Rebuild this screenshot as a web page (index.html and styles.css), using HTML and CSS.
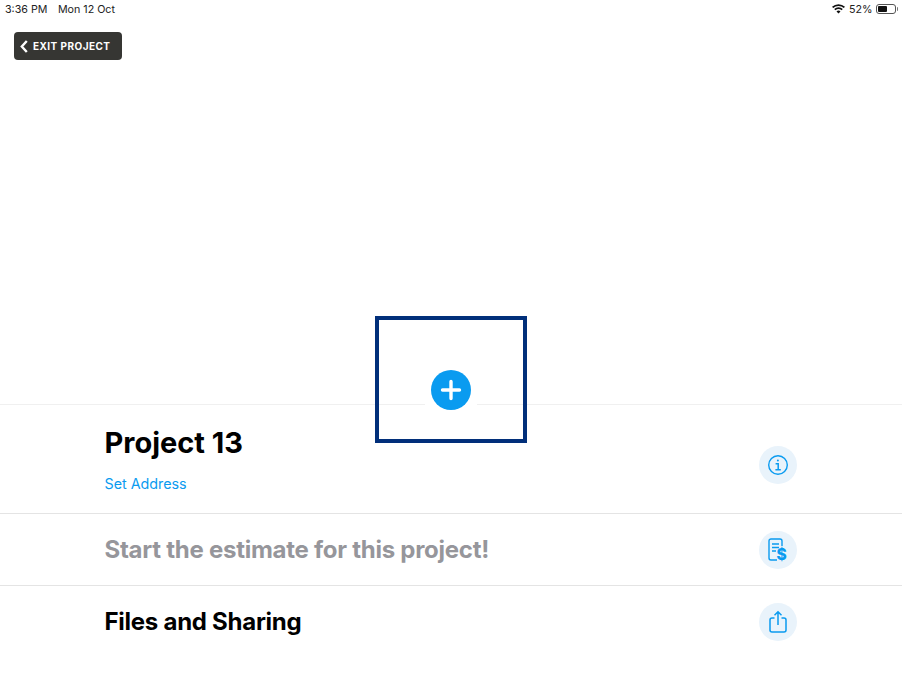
FILE: index.html
```html
<!DOCTYPE html>
<html lang="en">
<head>
<meta charset="utf-8">
<title>Project 13</title>
<link rel="stylesheet" href="styles.css">
</head>
<body>
<div class="page">
  <header class="status">
    <div class="status-left"><span>3:36 PM</span><span>Mon 12 Oct</span></div>
    <div class="status-right">
      <svg class="wifi" width="13" height="10" viewBox="0 0 13 10"><path d="M6.5 9.6 4.5 7.4a3 3 0 0 1 4 0zM3.4 6.3 2.2 5a6.4 6.4 0 0 1 8.6 0L9.6 6.3a4.6 4.6 0 0 0-6.2 0zM1.2 4 0 2.7a9.6 9.6 0 0 1 13 0L11.8 4a7.9 7.9 0 0 0-10.6 0z" fill="#111"/></svg>
      <span>52%</span>
      <span class="battery"><span class="battery-fill"></span></span>
      <span class="battery-cap"></span>
    </div>
  </header>
  <div class="top">
    <button class="exit">
      <svg width="8" height="13" viewBox="0 0 8 13"><path d="M6.800 1 1.800 6.500l5 5.500" fill="none" stroke="#fff" stroke-width="2.400"/></svg>
      <span>EXIT PROJECT</span>
    </button>
  </div>
  <main class="rows">
    <section class="row row-project">
      <div class="row-text">
        <h1 class="title">Project 13</h1>
        <a class="link">Set Address</a>
      </div>
      <span class="round">
        <svg width="22" height="22" viewBox="0 0 22 22" fill="none" stroke="#0a9bf0" stroke-width="1.4"><circle cx="11" cy="11" r="9.3"/><path d="M8.6 9.700H11.200V15.600M8.400 15.800H13.800" stroke-width="1.500"/><circle cx="10.900" cy="6.600" r="1" fill="#0a9bf0" stroke="none"/></svg>
      </span>
    </section>
    <section class="row row-estimate">
      <h2 class="heading muted">Start the estimate for this project!</h2>
      <span class="round">
        <svg width="24" height="26" viewBox="-1 -1 24 26" fill="none" stroke="#0a9bf0" stroke-width="1.400"><path d="M10 22H4a2 2 0 0 1-2-2V3a2 2 0 0 1 2-2h9a2 2 0 0 1 2 2v5"/><path d="M5 6h7M5 9.500h7M5 13h4"/><text class="dollar" x="9.500" y="21.500">$</text></svg>
      </span>
    </section>
    <section class="row row-files">
      <h2 class="heading">Files and Sharing</h2>
      <span class="round">
        <svg width="20" height="24" viewBox="0 0 20 24" fill="none" stroke="#0a9bf0" stroke-width="1.500"><path d="M6.500 8H4a2 2 0 0 0-2 2v10a2 2 0 0 0 2 2h12a2 2 0 0 0 2-2V10a2 2 0 0 0-2-2h-2.500"/><path d="M10 15V2M6.500 5.200 10 1.700l3.500 3.500"/></svg>
      </span>
    </section>
  </main>
  <div class="highlight"></div>
  <div class="plus-halo"></div>
  <button class="plus" aria-label="Add">
    <svg width="22" height="22" viewBox="0 0 22 22"><path d="M2.500 11h17M11 2.500v17" stroke="#fff" stroke-width="3.400" stroke-linecap="round"/></svg>
  </button>
</div>
</body>
</html>
```
FILE: styles.css
```css
* { box-sizing: border-box; }
html, body { margin: 0; padding: 0; background: #fff; }
body { font-family: Inter, "Liberation Sans", sans-serif; color: #000; }
.page { position: relative; width: 902px; height: 678px; overflow: hidden; background: #fff; }

.status { display: flex; justify-content: space-between; align-items: center; height: 18px; padding: 0 4px 0 5px; font-size: 10.700px; color: #222; }
.status-left { display: flex; gap: 10.500px; }
.status-right { display: flex; align-items: center; gap: 3px; }
.wifi { margin-right: 1px; }
.battery { display: block; width: 20px; height: 10px; border: 1px solid #555; border-radius: 3px; padding: 1px; }
.battery-fill { display: block; width: 9px; height: 100%; background: #111; border-radius: 1px; }
.battery-cap { display: block; width: 1.500px; height: 4px; background: #777; margin-left: -2px; border-radius: 0 1px 1px 0; }

.top { height: 386px; padding: 14px 0 0 14px; }
.exit { display: flex; align-items: center; gap: 5px; width: 108px; height: 28px; padding: 0 0 0 6px; border: 0; border-radius: 4px; background: #363633; color: #fff; font: 700 10px Inter, "Liberation Sans", sans-serif; letter-spacing: 0.450px; }

.rows { display: flex; flex-direction: column; }
.row { display: flex; align-items: center; justify-content: space-between; padding: 0 105px 0 104.500px; border-top: 1px solid #e4e4e4; }
.row-project { height: 109px; border-top: 1px solid #f0f0f0; padding-top: 12px; }
.row-estimate { height: 72px; }
.row-files { height: 72px; }
.row-text { display: flex; flex-direction: column; align-items: flex-start; gap: 15px; margin-top: -13px; }
.title { margin: 0; font-size: 29px; line-height: 35px; font-weight: 700; }
.link { font-size: 14.300px; line-height: 18px; color: #0a9bf0; }
.heading { margin: 0; font-size: 24px; line-height: 30px; font-weight: 700; letter-spacing: -0.260px; position: relative; top: 0.500px; }
.muted { color: #96969b; }
.round { display: flex; align-items: center; justify-content: center; flex: none; width: 38px; height: 38px; border-radius: 50%; background: #e9f3fb; }
.dollar { font: 800 15.500px Inter, "Liberation Sans", sans-serif; fill: #0a9bf0; stroke: none; }

.highlight { position: absolute; left: 375px; top: 316px; width: 152px; height: 127px; border: 4px solid #012f7a; }
.plus-halo { position: absolute; left: 425px; top: 400px; width: 52px; height: 8px; background: #fff; }
.plus { position: absolute; left: 431px; top: 370px; display: flex; align-items: center; justify-content: center; width: 40px; height: 40px; padding: 0; border: 0; border-radius: 50%; background: #0a9bf0; }
```
